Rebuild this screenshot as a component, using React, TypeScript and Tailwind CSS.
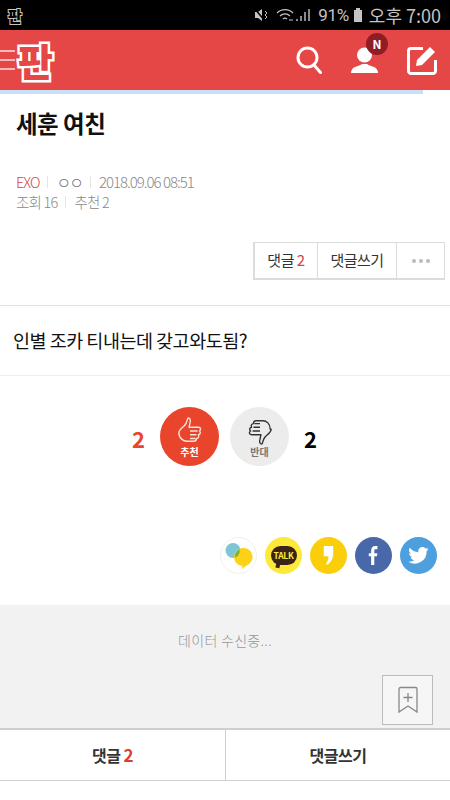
import React from "react";

function StatusBar() {
  return (
    <div className="h-[30px] bg-black flex items-center justify-between pl-[8px] pr-[9px] text-[#c4c4c4]">
      <span className="text-[15px] font-black leading-none text-black [-webkit-text-stroke:2px_#c4c4c4] [paint-order:stroke_fill]">판</span>
      <div className="flex items-center">
        <svg width="16" height="14" viewBox="0 0 16 14" className="mr-[6px]" fill="#c4c4c4">
          <path d="M1 4h3l4-3v12l-4-3H1z" />
          <path d="M1 1l10 12" stroke="#000" strokeWidth="1.5" />
          <path d="M11 3l2 2-2 2 2 2-2 2" stroke="#c4c4c4" fill="none" strokeWidth="1" />
        </svg>
        <svg width="36" height="16" viewBox="0 0 36 16" fill="none" stroke="#c4c4c4" className="mr-[6px]">
          <path d="M1 6a11 11 0 0 1 16 0M4 9a7 7 0 0 1 10 0M7 12a3 3 0 0 1 4 0" strokeWidth="1.2" />
          <path d="M9 14h.1M13 13h4" strokeWidth="1.2" />
          <path d="M21 14v-2M25 14v-5M29 14V5M33 14V2" strokeWidth="1.4" />
        </svg>
        <span className="text-[17px] leading-none font-['Roboto'] tracking-[-0.3px]">91%</span>
        <svg width="10" height="14" viewBox="0 0 10 14" fill="#c4c4c4" className="ml-[4px] mr-[6px]">
          <path d="M3 0h4v2h2v12H1V2h2z" />
        </svg>
        <span className="text-[18px] leading-none">오후 7:00</span>
      </div>
    </div>
  );
}

function Header() {
  return (
    <div className="h-[60px] bg-[#e54646] flex items-center justify-between pr-[13px]">
      <div className="flex items-center">
        <div className="flex flex-col gap-[7px] w-[15px]">
          <div className="h-[2px] bg-[#f7b8b8]" />
          <div className="h-[2px] bg-[#f7b8b8]" />
          <div className="h-[2px] bg-[#f7b8b8]" />
        </div>
        <span className="ml-[3px] text-[38px] leading-none font-black text-[#e54646] [-webkit-text-stroke:5px_white] [paint-order:stroke_fill]">판</span>
      </div>
      <div className="flex items-center">
        <svg width="26" height="28" viewBox="0 0 26 28" fill="none" stroke="white" strokeWidth="3" strokeLinecap="round">
          <circle cx="11.500" cy="11.500" r="9.500" />
          <path d="M18 19l6.500 7.500" />
        </svg>
        <div className="relative ml-[29px]">
          <svg width="27" height="26" viewBox="0 0 27 26" fill="white" className="block">
            <circle cx="13.500" cy="8" r="7.500" />
            <path d="M0 26c0-2 1-5 4-6 3-1 6-2 7-3h5c1 1 4 2 7 3 3 1 4 4 4 6z" />
          </svg>
          <div className="absolute -top-[14px] left-[15px] w-[22px] h-[22px] rounded-full bg-[#8f1d26] text-white text-[12px] font-bold flex items-center justify-center">N</div>
        </div>
        <svg width="30" height="30" viewBox="0 0 30 30" fill="none" className="ml-[29px]">
          <path d="M16 3.500H4A2.500 2.500 0 0 0 1.500 6v20A2.500 2.500 0 0 0 4 28.500h22a2.500 2.500 0 0 0 2.500-2.500V15" stroke="white" strokeWidth="3" />
          <path d="M10 15L23 2l5 5-13 13-6 1z" fill="white" />
        </svg>
      </div>
    </div>
  );
}

function ShareIcon({ bg, children, extra = "" }: { bg: string; children: React.ReactNode; extra?: string }) {
  return <div className={`w-[37px] h-[37px] rounded-full flex items-center justify-center ${bg} ${extra}`}>{children}</div>;
}

export default function App() {
  return (
    <div className="w-[450px] h-[800px] bg-white overflow-hidden flex flex-col" style={{ fontFamily: '"Noto Sans CJK KR", "Noto Sans", sans-serif' }}>
      <StatusBar />
      <Header />
      <div className="h-[4px] w-[423px] bg-[#c5e0f7]" />

      <div className="flex-1 flex flex-col min-h-0">
        <h1 className="pl-[16px] pt-[12px] h-[67px] text-[23.500px] leading-[34px] font-bold text-[#111] tracking-[-0.5px]">세훈 여친</h1>

        <div className="pl-[16px] mt-[11px] flex items-center h-[20px] text-[14.500px] font-light tracking-[-1px] text-[#888]">
          <span className="text-[#d9404a]">EXO</span>
          <span className="mx-[8px] w-px h-[12px] bg-[#e5e5e5]" />
          <span className="text-[16px] tracking-[-2px] text-[#777]">ㅇㅇ</span>
          <span className="mx-[8px] w-px h-[12px] bg-[#e5e5e5]" />
          <span className="text-[15px]">2018.09.06 08:51</span>
        </div>
        <div className="pl-[16px] flex items-center h-[20px] text-[14.500px] font-light tracking-[-0.8px] text-[#888]">
          <span>조회 16</span>
          <span className="mx-[8px] w-px h-[12px] bg-[#e5e5e5]" />
          <span>추천 2</span>
        </div>

        <div className="flex justify-end pr-[5px] mt-[30px]">
          <div className="flex h-[38px] border border-[#dcdcdc] border-b-2 border-l-2 text-[15px] text-[#333] tracking-[-0.5px]">
            <div className="w-[63px] flex items-center justify-center border-r border-[#dcdcdc]">댓글&nbsp;<span className="text-[#d9404a]">2</span></div>
            <div className="w-[79px] flex items-center justify-center border-r border-[#dcdcdc]">댓글쓰기</div>
            <div className="w-[47px] flex items-center justify-center gap-[3px]">
              <i className="w-[4px] h-[4px] rounded-full bg-[#bbb]" />
              <i className="w-[4px] h-[4px] rounded-full bg-[#bbb]" />
              <i className="w-[4px] h-[4px] rounded-full bg-[#bbb]" />
            </div>
          </div>
        </div>

        <div className="mt-[25px] h-[71px] border-t border-b border-[#e2e2e2] border-b-[#efefef] pl-[13px] flex items-center text-[18.500px] text-[#111] tracking-[-0.5px] font-normal">
          인별 조카 티내는데 갖고와도됨?
        </div>

        <div className="flex items-center justify-center h-[121px] pr-[1px]">
          <span className="text-[22px] font-bold text-[#e8452c] mr-[15px] mt-[4px]">2</span>
          <div className="w-[59px] h-[59px] rounded-full bg-[#e8452c] flex flex-col items-center justify-center">
            <svg width="26" height="30" viewBox="0 0 28 30" fill="none" stroke="#fbe3dc" strokeWidth="1.500" strokeLinejoin="round">
              <path d="M2 17c0-4 5-6 7-9 2-3 2-6 3-7 2 0 3 2 2 5l-1 5h10c3 0 3 3 1 4 2 1 1 4-1 4 1 2 0 4-2 4 0 2-1 3-3 3h-7c-4 0-9-3-9-9z" />
              <path d="M14 15h8M14 19h7M14 23h6" />
            </svg>
            <span className="text-[10px] font-bold leading-[12px] text-white">추천</span>
          </div>
          <div className="w-[59px] h-[59px] rounded-full bg-[#ececec] flex flex-col items-center justify-center ml-[11px]">
            <svg width="26" height="30" viewBox="0 0 28 30" fill="none" stroke="#333" strokeWidth="1.500" strokeLinejoin="round">
              <path d="M26 13c0 4-5 6-7 9-2 3-2 6-3 7-2 0-3-2-2-5l1-5H5c-3 0-3-3-1-4-2-1-1-4 1-4-1-2 0-4 2-4 0-2 1-3 3-3h7c4 0 8 3 8 9z" />
              <path d="M14 15H6M14 11H7M14 7H8" />
            </svg>
            <span className="text-[10px] font-bold leading-[12px] text-[#777]">반대</span>
          </div>
          <span className="text-[22px] font-bold text-black ml-[15px] mt-[4px]">2</span>
        </div>

        <div className="flex justify-end gap-[8px] pr-[13px] pt-[40px] h-[108px]">
          <ShareIcon bg="bg-white" extra="border border-[#f0f0f0]">
            <svg width="35" height="35" viewBox="0 0 35 35">
              <circle cx="12" cy="12.500" r="7.500" fill="#7cc6d8" />
              <path d="M22.500 10a9 9 0 0 1 3 17.500L21 31l.5-3a9 9 0 0 1 1-18z" fill="#fcd116" />
              <path d="M14 19.700a9 9 0 0 1 4.500-8.800A7.500 7.500 0 0 1 14 19.700z" fill="#7fb13b" />
            </svg>
          </ShareIcon>
          <ShareIcon bg="bg-[#fde93a]">
            <div className="relative w-[26px] h-[19px] rounded-full bg-[#3b2417] flex items-center justify-center text-[#fde93a] text-[8.500px] font-bold tracking-[-0.3px] leading-none">TALK
              <span className="absolute -bottom-[3px] left-[5px] w-[4px] h-[6px] bg-[#3b2417] rotate-12" />
            </div>
          </ShareIcon>
          <ShareIcon bg="bg-[#fbce0c]">
            <svg width="11" height="21" viewBox="0 0 14 26" fill="white">
              <path d="M1 1h12v10c0 6-4 12-8 14l-1-2c2-2 3-5 3-9H1z" />
            </svg>
          </ShareIcon>
          <ShareIcon bg="bg-[#4968a9]">
            <svg width="11" height="21" viewBox="0 0 14 26" fill="white">
              <path d="M4 25V14H1v-4h3V7c0-4 2-6 5-6h3v4h-2c-1.500 0-2 .6-2 2v3h4l-.6 4H8v11z" />
            </svg>
          </ShareIcon>
          <ShareIcon bg="bg-[#4d9fdd]">
            <svg width="21" height="17" viewBox="0 0 24 20" fill="white">
              <path d="M24 2.400c-.9.400-1.800.7-2.800.8 1-.6 1.800-1.600 2.200-2.700-1 .6-2 1-3.100 1.200A4.900 4.900 0 0 0 11.900 6.200 14 14 0 0 1 1.700 1a4.900 4.900 0 0 0 1.500 6.600c-.8 0-1.600-.2-2.200-.6 0 2.400 1.700 4.400 3.900 4.900-.7.200-1.500.2-2.200.1.600 2 2.400 3.400 4.600 3.400A9.900 9.900 0 0 1 0 17.400 14 14 0 0 0 21.500 5c1-.7 1.800-1.600 2.500-2.600z" />
            </svg>
          </ShareIcon>
        </div>

        <div className="relative flex-1 bg-[#f2f2f2] border-b-[2px] border-[#cfcfcf] min-h-0">
          <p className="text-center text-[14px] text-[#999] pt-[25px] leading-[20px] font-light tracking-[0.3px]">데이터 수신중...</p>
          <div className="absolute left-[382px] top-[70px] w-[51px] h-[50px] border border-[#bbb] bg-[#f6f6f6] flex items-center justify-center">
            <svg width="22" height="28" viewBox="0 0 22 28" fill="none" stroke="#888" strokeWidth="1.300">
              <path d="M2 26V3a1.500 1.500 0 0 1 1.500-1.500h15A1.500 1.500 0 0 1 20 3v23l-9-6z" />
              <path d="M11 7v9M6.500 11.500h9" />
            </svg>
          </div>
        </div>

        <div className="h-[51px] flex shrink-0 text-[16px] font-bold text-[#333] tracking-[-0.5px] border-b border-[#cfcfcf]">
          <div className="w-[226px] flex items-center justify-center border-r border-[#cfcfcf]">댓글&nbsp;<span className="text-[#d9402f] text-[17px]">2</span></div>
          <div className="flex-1 flex items-center justify-center">댓글쓰기</div>
        </div>
        <div className="h-[19px] shrink-0" />
      </div>
    </div>
  );
}
